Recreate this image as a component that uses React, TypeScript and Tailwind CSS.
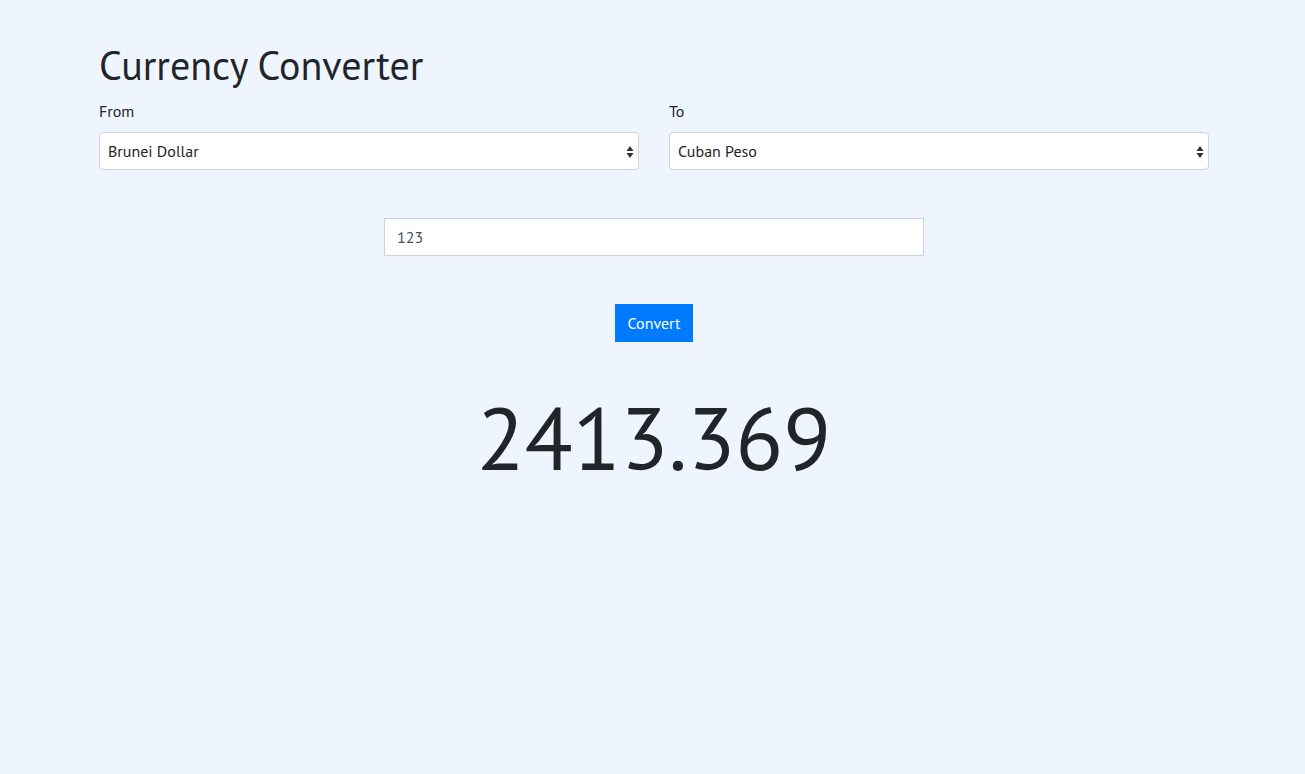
import React from "react";

const font = { fontFamily: '"PT Sans", "Noto Sans", "Open Sans", sans-serif' };

function Arrows() {
  return (
    <svg width="8" height="16" viewBox="0 0 8 16" className="absolute right-[4px] top-[11px]">
      <path d="M4 2 L7.5 7 L0.5 7 Z" fill="#333" />
      <path d="M4 14 L7.5 9 L0.5 9 Z" fill="#333" />
    </svg>
  );
}

function Select({ value }: { value: string }) {
  return (
    <div className="relative h-[38px] w-full rounded-[4px] border border-[#ced4da] bg-white">
      <div className="flex h-full items-center pl-[8px] text-[16px] text-[#212529]">{value}</div>
      <Arrows />
    </div>
  );
}

export default function App() {
  return (
    <div className="min-h-[774px] w-full bg-[#eef5ff] text-[#212529]" style={font}>
      <div className="ml-[99px] w-[1110px] pt-[41px]">
        <h1 className="text-[40px] leading-[1.2] font-normal">Currency Converter</h1>
        <div className="mt-[10px] grid grid-cols-2 gap-[30px]">
          <div>
            <div className="mb-[9px] text-[16px] leading-[24px]">From</div>
            <Select value="Brunei Dollar" />
          </div>
          <div>
            <div className="mb-[9px] text-[16px] leading-[24px]">To</div>
            <Select value="Cuban Peso" />
          </div>
        </div>
        <div className="mt-[48px] flex justify-center">
          <div className="flex h-[38px] w-[540px] items-center border border-[#ced4da] bg-white pl-[12px] text-[16px] text-[#495057]">
            123
          </div>
        </div>
        <div className="mt-[48px] flex justify-center">
          <button className="h-[38px] w-[78px] bg-[#007bff] text-[16px] text-white">Convert</button>
        </div>
        <div className="mt-[43px] text-center text-[88px] leading-[1.2]">2413.369</div>
      </div>
    </div>
  );
}
